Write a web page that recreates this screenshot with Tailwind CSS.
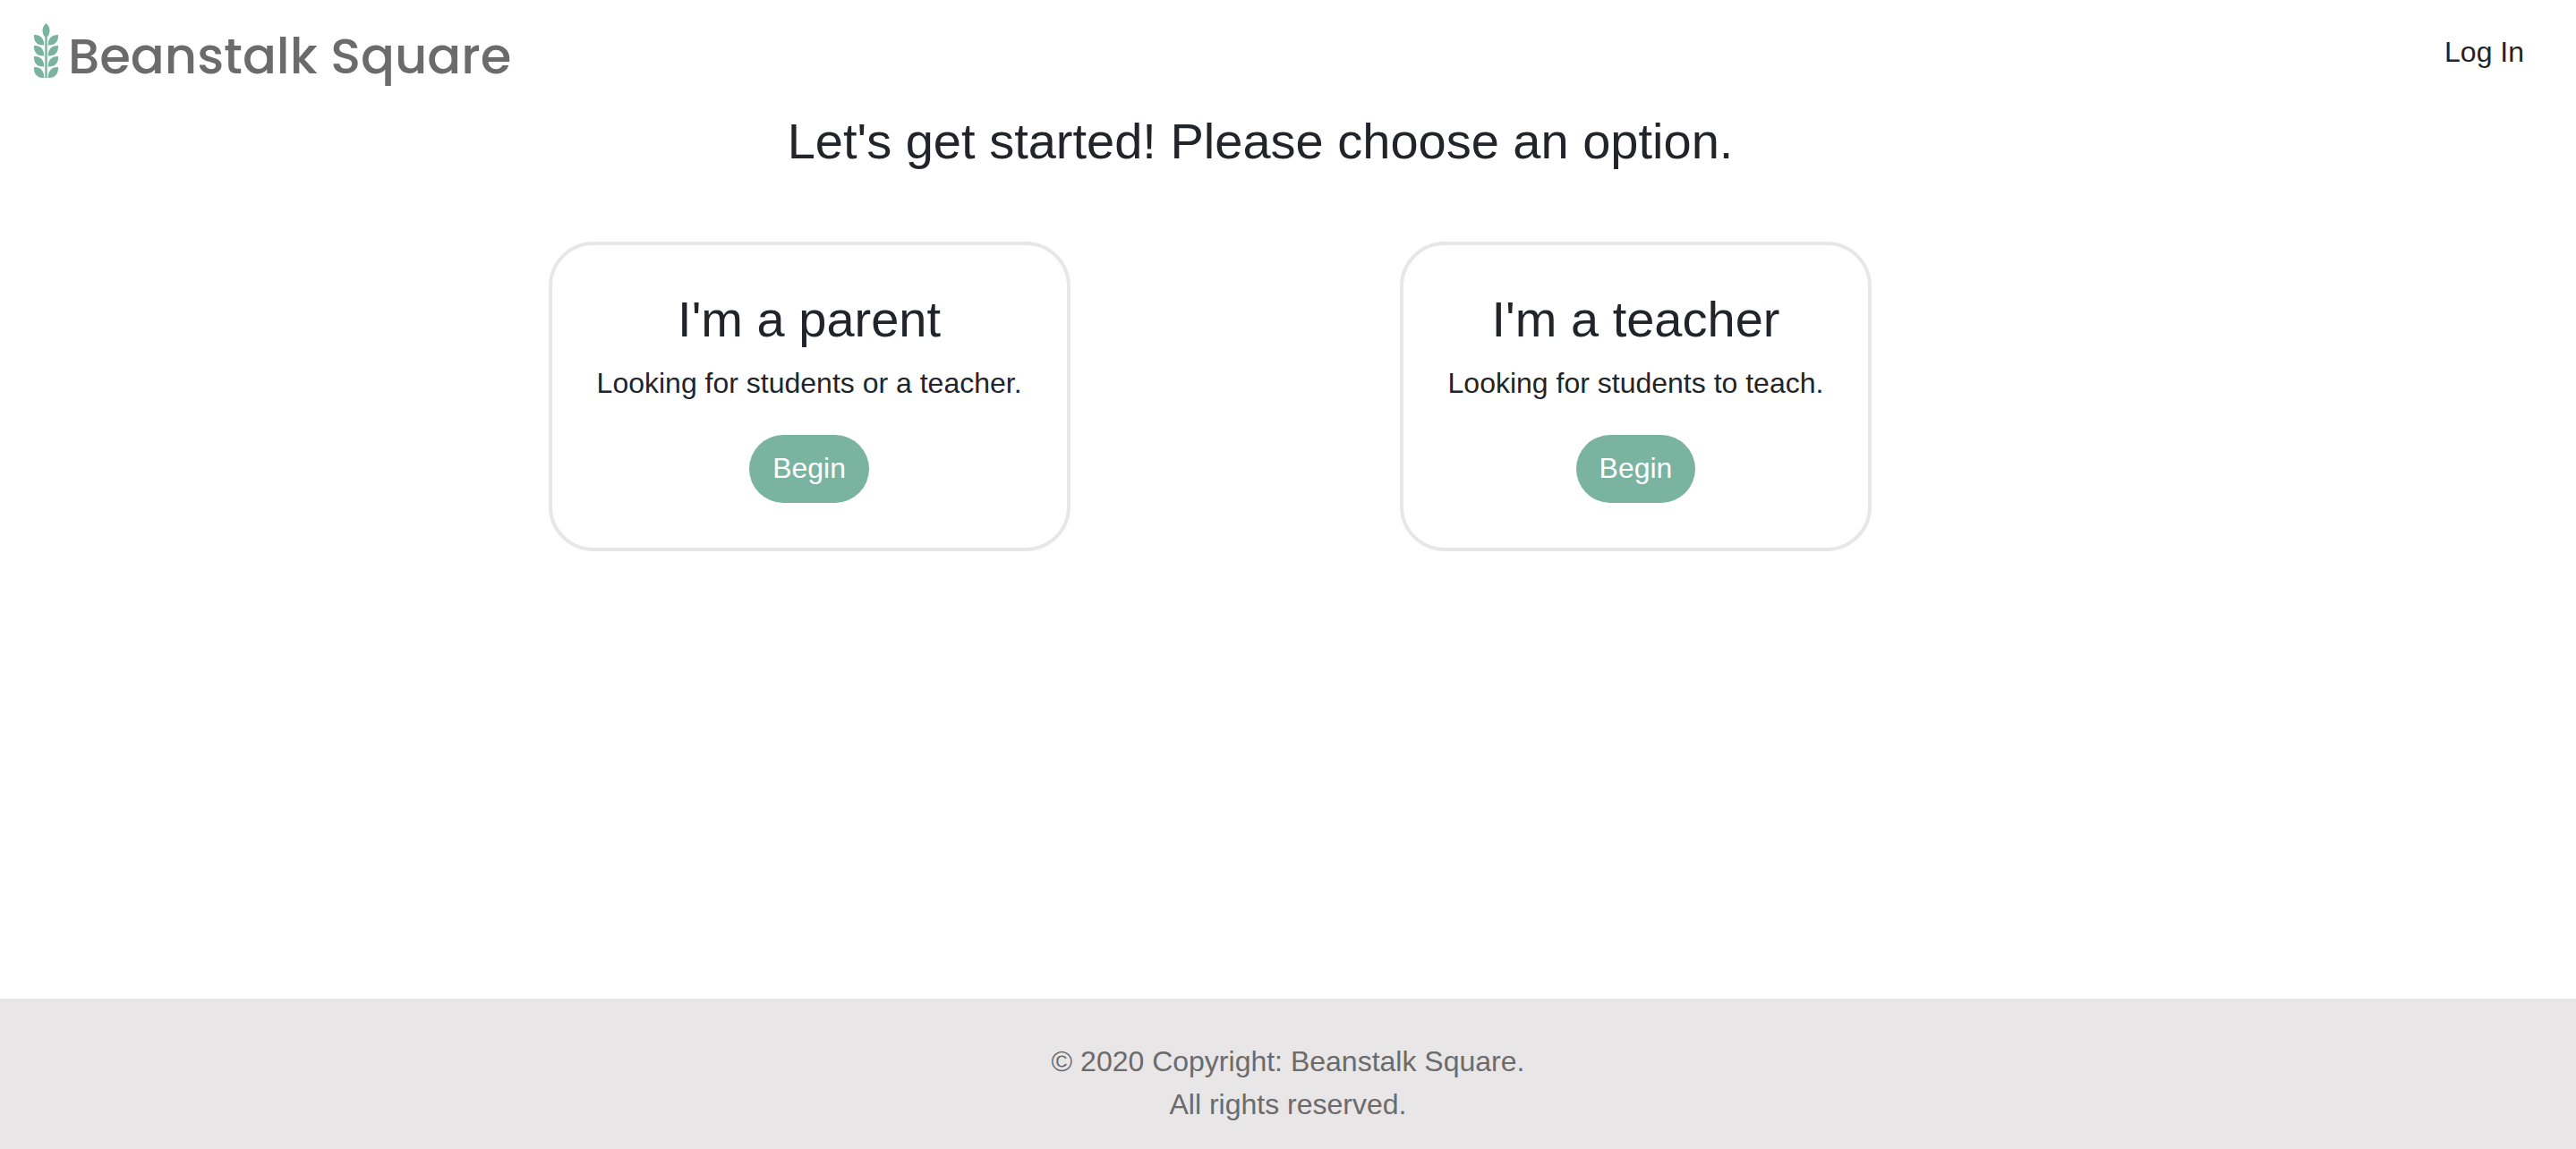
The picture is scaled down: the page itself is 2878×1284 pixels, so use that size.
<!DOCTYPE html>
<html lang="en">
<head>
<meta charset="utf-8">
<title>Beanstalk Square</title>
<script src="https://cdn.jsdelivr.net/npm/@tailwindcss/browser@4"></script>
</head>
<body class="flex min-h-screen flex-col bg-white font-['Helvetica_Neue','Liberation_Sans',sans-serif] text-[32px] leading-12 text-[#212529]">
  <header class="flex items-start justify-between pt-6 pr-[58px] pl-9">
    <a href="#" class="flex items-start gap-2 text-[#6b6b6b]">
      <svg class="h-16 w-8" viewBox="0 0 32 64" fill="#7ab3a0" aria-hidden="true">
        <path d="M15.500 2C13 4 11.500 7 11.500 10C11.500 13 12.500 15.500 14 17H17C18.500 15.500 19.500 13 19.500 10C19.500 7 18 4 15.500 2Z"/>
        <path d="M14.300 16H16.700V63H14.300Z"/>
        <path d="M2 15C9 14.500 13.500 19 13.300 26.500C6 27 1.500 23 2 15ZM29 15C22 14.500 17.500 19 17.700 26.500C25 27 29.500 23 29 15Z"/>
        <path d="M2 27C9 26.500 13.500 31 13.300 38.500C6 39 1.500 35 2 27ZM29 27C22 26.500 17.500 31 17.700 38.500C25 39 29.500 35 29 27Z"/>
        <path d="M2 39C9 38.500 13.500 43 13.300 50.500C6 51 1.500 47 2 39ZM29 39C22 38.500 17.500 43 17.700 50.500C25 51 29.500 47 29 39Z"/>
        <path d="M2 51C9 50.500 13.500 55 13.300 63C6 63.500 1.500 59 2 51ZM29 51C22 50.500 17.500 55 17.700 63C25 63.500 29.500 59 29 51Z"/>
      </svg>
      <span class="font-[Poppins,Inter,sans-serif] text-[56px] leading-[78px] font-medium">Beanstalk Square</span>
    </a>
    <nav class="pt-[10px]"><a href="#">Log In</a></nav>
  </header>
  <main class="flex-1">
    <h1 class="pt-[22px] pr-[62px] text-center text-[56px] leading-[68px]">Let's get started! Please choose an option.</h1>
    <div class="flex flex-wrap justify-center gap-x-[368px] gap-y-12 pt-[78px] pr-[174px]">
      <section class="rounded-[50px] border-4 border-[#e8e6e7] p-[50px] text-center">
        <h2 class="text-[56px] leading-[66px]">I'm a parent</h2>
        <p class="mt-[14px] mb-[34px]">Looking for students or a teacher.</p>
        <button type="button" class="mx-auto block rounded-full bg-[#7ab3a0] px-[26px] pt-[13px] pb-[15px] text-white">Begin</button>
      </section>
      <section class="rounded-[50px] border-4 border-[#e8e6e7] p-[50px] text-center">
        <h2 class="text-[56px] leading-[66px]">I'm a teacher</h2>
        <p class="mt-[14px] mb-[34px]">Looking for students to teach.</p>
        <button type="button" class="mx-auto block rounded-full bg-[#7ab3a0] px-[26px] pt-[13px] pb-[15px] text-white">Begin</button>
      </section>
    </div>
  </main>
  <footer class="bg-[#e8e6e7] pt-[46px] pb-[26px] text-center text-[#6b6b6b]">
    <p>© 2020 Copyright: Beanstalk Square.</p>
    <p>All rights reserved.</p>
  </footer>
</body>
</html>
